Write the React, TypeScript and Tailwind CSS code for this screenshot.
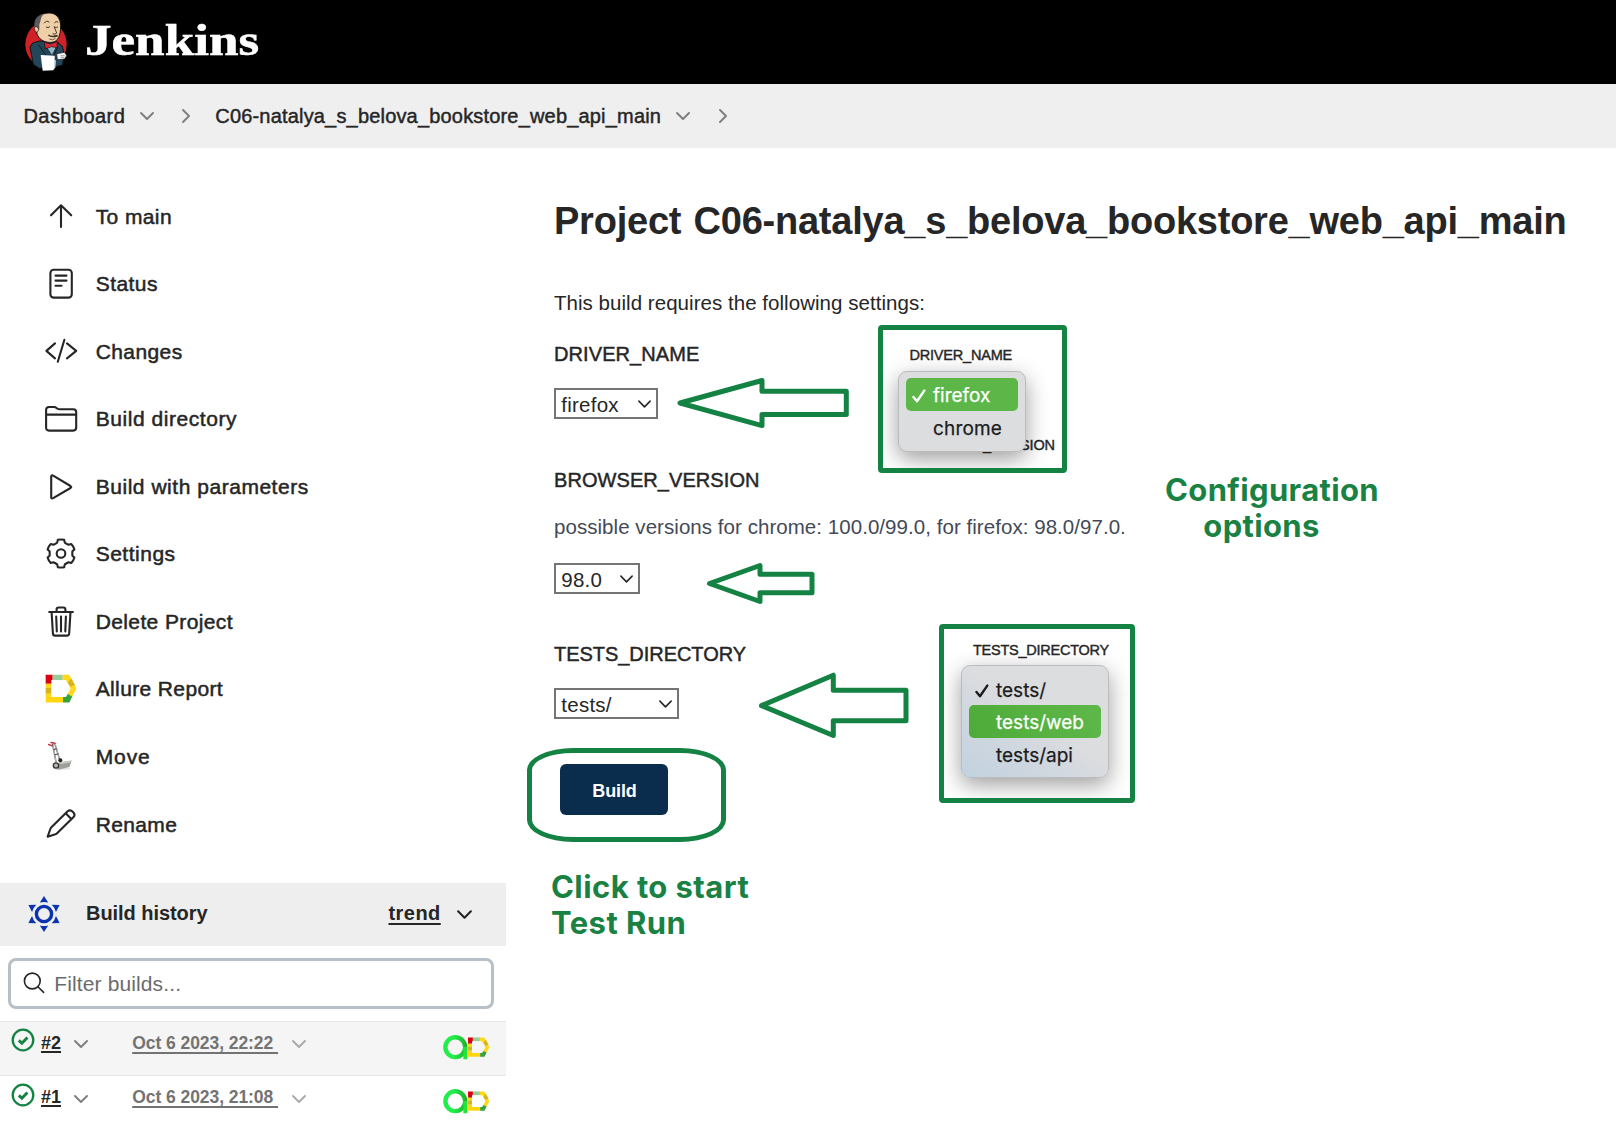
import type { ReactNode } from "react";

const GREEN = "#138243";

function Icon({ children, box = "0 0 34 34" }: { children: ReactNode; box?: string }) {
  return (
    <svg viewBox={box} className="size-[34px] shrink-0" fill="none" stroke="#262626" strokeWidth={2.1} strokeLinecap="round" strokeLinejoin="round">
      {children}
    </svg>
  );
}

function Chevron({ className, width = 2 }: { className: string; width?: number }) {
  return (
    <svg viewBox="0 0 16 10" className={className} fill="none" stroke="currentColor" strokeWidth={width} strokeLinecap="round" strokeLinejoin="round">
      <path d="M2 2l6 6 6-6" />
    </svg>
  );
}

function Separator({ className }: { className: string }) {
  return (
    <svg viewBox="0 0 10 16" className={className} fill="none" stroke="#808080" strokeWidth={2} strokeLinecap="round" strokeLinejoin="round">
      <path d="M2 2l6 6-6 6" />
    </svg>
  );
}

function AllureShape() {
  return (
    <g stroke="none">
      <path d="M76 495H97V511H93V522H76Z" fill="#d8000f" />
      <path d="M97 495H127V511H97Z" fill="#97cc9b" />
      <path d="M127 495H146L157 513L143 522L137 511H127Z" fill="#ffd817" />
      <path d="M153 506L165 527L151 534L142 518Z" fill="#d8b41b" />
      <path d="M162 526L168 537L156 560L142 553L151 537L148 532Z" fill="#ffd817" />
      <path d="M142 553L156 560L147 578H128V562H137Z" fill="#35a33b" />
      <path d="M76 522H93V534H76ZM76 552H93V562H128V578H76Z" fill="#ffd60f" />
      <path d="M76 534H93V552H76Z" fill="#d8b41b" />
    </g>
  );
}

function gearPath() {
  const pt = (deg: number, r: number) => {
    const a = (deg * Math.PI) / 180;
    return `${(17 + r * Math.cos(a)).toFixed(2)} ${(16.5 + r * Math.sin(a)).toFixed(2)}`;
  };
  let d = "";
  for (let k = 0; k < 6; k++) {
    const a = 60 * k - 90;
    d += `${k ? "L" : "M"}${pt(a - 13, 14)}Q${pt(a, 14.5)} ${pt(a + 13, 14)}L${pt(a + 19, 11.6)}Q${pt(a + 30, 11.2)} ${pt(a + 41, 11.6)}`;
  }
  return d + "Z";
}

const menu: { label: string; tracking: string; icon: ReactNode }[] = [
  { label: "To main", tracking: "tracking-[0.4px]", icon: <Icon><path d="M17 28V6.5M7 16.3L17 6.3L27.2 16.3" /></Icon> },
  {
    label: "Status",
    tracking: "tracking-[0.45px]",
    icon: <Icon><rect x="6.4" y="2.8" width="21.4" height="27.8" rx="3.3" /><path d="M11.5 8.6h11M11.5 13.6h11M11.5 18.8h6" /></Icon>,
  },
  { label: "Changes", tracking: "tracking-[0.4px]", icon: <Icon><path d="M11 9.4L2.4 16.9L11 24.4M23 9.4L32.2 16.9L23 24.4M20.4 5.8L13.8 27.8" /></Icon> },
  {
    label: "Build directory",
    tracking: "tracking-[0.55px]",
    icon: <Icon><path d="M5 5H10.2C12.4 5 12.6 7.2 15 7.2H29.3Q32.2 7.2 32.2 10.2V25.6Q32.2 28.6 29.3 28.6H5Q2.1 28.6 2.1 25.6V8Q2.1 5 5 5ZM2.1 12.6H32.2" /></Icon>,
  },
  {
    label: "Build with parameters",
    tracking: "tracking-[0.53px]",
    icon: <Icon><path d="M7.2 6.6V26.9Q7.2 29.2 9.2 28.1L26.5 18Q28 17 26.5 16L9.2 5.6Q7.2 4.6 7.2 6.6Z" /></Icon>,
  },
  { label: "Settings", tracking: "tracking-[0.5px]", icon: <Icon><path d={gearPath()} /><circle cx="17" cy="16.5" r="4.3" /></Icon> },
  {
    label: "Delete Project",
    tracking: "tracking-[0.38px]",
    icon: <Icon><path d="M5.2 7H28.9M12.6 7V4.6Q12.6 2.5 14.6 2.5H19.4Q21.4 2.5 21.4 4.6V7M7.6 7L8.9 28.4Q9 30.6 11 30.6H23Q25 30.6 25.2 28.4L26.5 7M12.2 11.5L12.8 26.4M17 11.5V26.4M21.9 11.5L21.3 26.4" /></Icon>,
  },
  { label: "Allure Report", tracking: "tracking-[0.37px]", icon: <Icon box="71 486.8 102 102"><AllureShape /></Icon> },
  {
    label: "Move",
    tracking: "tracking-[0.9px]",
    icon: (
      <Icon box="71 689.5 102 102">
        <ellipse cx="124" cy="775" rx="26" ry="4" fill="#e4e4e4" stroke="none" />
        <path d="M117 757L153 752L147 770L113 778Z" fill="#9ba197" stroke="#80857c" strokeWidth="1" />
        <path d="M118 757L152 752L150 757L118 762Z" fill="#c9cdc6" stroke="none" />
        <path d="M97 702L107 756M104 701L117 746" stroke="#555" strokeWidth="4.5" />
        <path d="M98 705L107 756M105 702L116 744" stroke="#f1f1f1" strokeWidth="2" />
        <path d="M100 718L109 716M103 734L113 731" stroke="#444" strokeWidth="3" />
        <circle cx="120" cy="750" r="6" fill="#222" stroke="none" />
        <path d="M85 703L96 707M92 697L104 699" stroke="#c33440" strokeWidth="4.5" />
        <circle cx="107" cy="766" r="8" fill="#b5b5b5" stroke="#333" strokeWidth="4" />
      </Icon>
    ),
  },
  {
    label: "Rename",
    tracking: "tracking-[0.35px]",
    icon: <Icon box="71 892 102 102"><g strokeWidth="6.3"><path d="M82 981L90 958Q91 955 94 952L142 905C152 896 169 913 159 923L111 970Q108 973 105 974ZM136 911L153 928" /></g></Icon>,
  },
];

function Butler() {
  return (
    <svg viewBox="0 0 180 225" className="h-[75px] w-[60px] shrink-0">
      <ellipse cx="78" cy="118" rx="62" ry="68" fill="#cf2127" />
      <path d="M38 114L60 108L113 112L127 124L132 146L128 180L104 186L58 190L40 178L34 148L30 126Z" fill="#24465a" stroke="#111" strokeWidth="3" />
      <path d="M74 118L96 152L112 120Z" fill="#8fb4cc" stroke="#111" strokeWidth="2" />
      <path d="M45 62C42 40 58 26 84 24C108 22 122 40 122 62C122 92 114 110 96 112C74 114 56 104 50 84Z" fill="#efcfa8" stroke="#181310" strokeWidth="3" />
      <path d="M44 68C40 44 52 30 72 27C60 36 64 48 58 58L58 72L50 76Z" fill="#5b5a5c" />
      <path d="M48 64C40 66 44 82 52 82L57 72Z" fill="#efcfa8" stroke="#181310" strokeWidth="2" />
      <path d="M72 55Q80 44 88 52M103 54Q108 46 115 52M78 66Q84 70 90 65M104 66Q109 70 114 65M102 64L110 84Q106 90 98 86" fill="none" stroke="#30231b" strokeWidth="2.6" />
      <path d="M85 90Q94 98 113 92" fill="none" stroke="#46342a" strokeWidth="5" />
      <path d="M88 102Q98 107 106 101" fill="none" stroke="#30231b" strokeWidth="2" />
      <path d="M73 112L91 117L111 110L112 128L94 125L76 132Z" fill="#dc2830" stroke="#111" strokeWidth="2" />
      <path d="M56 120L80 154L92 160M112 128L100 156" fill="none" stroke="#101d25" strokeWidth="3" />
      <path d="M110 146L134 142L140 152L134 162L112 164Z" fill="#f4f4f4" stroke="#111" strokeWidth="2" />
      <path d="M122 152H134M122 157H133" stroke="#777" strokeWidth="2" />
      <path d="M62 150L104 152L104 188L100 196L68 197Z" fill="#fff" />
      <path d="M102 166L108 166L106 188L102 192Z" fill="#cfd5d8" />
    </svg>
  );
}

function SunIcon() {
  return (
    <svg viewBox="-18 -18 36 36" className="size-9 shrink-0">
      <circle r="7.6" fill="none" stroke="#0b33ad" strokeWidth="3.4" />
      {[0, 60, 120, 180, 240, 300].map((a) => (
        <path key={a} transform={`rotate(${a})`} d="M0 -18L4.2 -11.4Q0 -12.6 -4.2 -11.4Z" fill="#0b33ad" />
      ))}
    </svg>
  );
}

function BuildRow({ id, date, shade }: { id: string; date: string; shade: string }) {
  return (
    <div className={`flex h-[54.4px] items-start border-t border-[#e9e9e9] pl-[11px] ${shade}`}>
      <svg viewBox="0 0 24 24" className="mt-[6.5px] size-6 shrink-0" fill="none" stroke="#138243">
        <circle cx="12" cy="12" r="10.3" strokeWidth="2.3" />
        <path d="M7.8 12.4L10.9 15.2L16.4 9.4" strokeWidth="2.9" />
      </svg>
      <span className="ml-[6px] mt-[9px] w-[31.7px] text-[18px] font-bold leading-6 text-[#262626] underline decoration-[1.5px] underline-offset-2">{id}</span>
      <Chevron className="mt-[17.5px] h-[10px] w-4 text-[#808080]" />
      <span className="ml-[43.5px] mt-[9px] w-[158.8px] whitespace-pre text-[17.5px] font-bold leading-6 tracking-[-0.06px] text-[#737373] underline decoration-[1.5px] underline-offset-[3px]">{date + "\u00a0"}</span>
      <Chevron className="mt-[17.5px] h-[10px] w-4 text-[#ababab]" />
      <svg viewBox="0 0 48 26" className="ml-[136px] mt-[12px] h-[26px] w-12 shrink-0">
        <defs>
          <linearGradient id={`a${id.slice(1)}`} x1="0" x2="1">
            <stop offset="0.4" stopColor="#22ee4b" />
            <stop offset="1" stopColor="#1fb62d" />
          </linearGradient>
        </defs>
        <circle cx="12.3" cy="13.2" r="9.9" fill="none" stroke={`url(#a${id.slice(1)})`} strokeWidth="4.4" />
        <path d="M20.2 13H24.3V25.2H20.4Z" fill="#22e53c" />
        <g transform="translate(7.4 -111.4) scale(0.232)">
          <AllureShape />
        </g>
      </svg>
    </div>
  );
}

function SelectBox({ value, className }: { value: string; className: string }) {
  return (
    <div className={`flex h-[31px] items-center justify-between border-2 border-[#757575] pl-[5.3px] pr-[3.8px] text-[20.5px] tracking-[0.25px] ${className}`}>
      <span className="pt-[2px] leading-6">{value}</span>
      <Chevron className="h-[10px] w-[15px] text-[#262626]" width={1.7} />
    </div>
  );
}

function Tick({ color }: { color: string }) {
  return (
    <svg viewBox="0 0 14 14" className="size-[14px]" fill="none" stroke={color} strokeWidth="2.4" strokeLinecap="round" strokeLinejoin="round">
      <path d="M1.5 8L5 12.2L12.3 1.6" />
    </svg>
  );
}

function Option({ label, checked, active, className }: { label: string; checked?: boolean; active?: boolean; className: string }) {
  return (
    <div className={`flex h-[32.6px] items-center rounded-[5px] pt-[4px] font-[Inter] text-[19px] ${active ? "text-white" : "text-[#1c1c1c]"} ${className}`}>
      <span className="w-[21px] shrink-0">{checked && <Tick color={active ? "#fff" : "#1c1c1c"} />}</span>
      <span className="[-webkit-text-stroke:0.25px]">{label}</span>
    </div>
  );
}

export default function App() {
  return (
    <div className="relative h-[1124px] w-[1616px] overflow-hidden bg-white font-['Liberation_Sans',Arial,sans-serif] text-[#262626]">
      <header className="flex h-[84px] items-start bg-black pl-5 pt-[5px]">
        <Butler />
        <span className="ml-[5px] mt-[8px] origin-left scale-x-[1.18] font-['Liberation_Serif',serif] text-[45px] font-bold leading-[54px] text-white [-webkit-text-stroke:0.6px]">
          Jenkins
        </span>
      </header>

      <nav className="flex h-16 items-center bg-[#efefef] pl-[23.5px] text-[20px] [-webkit-text-stroke:0.45px]">
        <span className="w-[115.5px] tracking-[0.43px]">Dashboard</span>
        <Chevron className="h-[10px] w-4 text-[#808080]" />
        <Separator className="ml-[26px] h-4 w-[10px]" />
        <span className="ml-[24.3px] w-[459.7px] tracking-[0.18px]">C06-natalya_s_belova_bookstore_web_api_main</span>
        <Chevron className="h-[10px] w-4 text-[#808080]" />
        <Separator className="ml-[27px] h-4 w-[10px]" />
      </nav>

      <div className="flex">
        <aside className="w-[506px] shrink-0 pt-[34.6px]">
          <ul>
            {menu.map((m) => (
              <li key={m.label} className="flex h-[67.55px] items-center gap-[18px] pl-[43.7px] text-[21px] [-webkit-text-stroke:0.5px]">
                {m.icon}
                <span className={m.tracking}>{m.label}</span>
              </li>
            ))}
          </ul>

          <div className="mt-[24.9px] flex h-[63px] items-center bg-[#eeeeee] pl-[25.5px] text-[20px] font-bold">
            <SunIcon />
            <span className="ml-[24.5px] w-[302.5px] pb-[2px] tracking-[-0.05px]">Build history</span>
            <span className="w-[67.5px] pb-[2px] tracking-[0.45px] underline decoration-[1.5px] underline-offset-[3px]">trend</span>
            <Chevron className="h-[11px] w-[17px]" />
          </div>

          <div className="ml-2 mt-[12px] flex h-[51px] w-[486px] items-center rounded-lg border-[3px] border-[#b6c0c6] pl-[12px]">
            <svg viewBox="0 0 22 22" className="size-[22px]" fill="none" stroke="#262626" strokeWidth="1.6" strokeLinecap="round">
              <circle cx="9.3" cy="9" r="7.9" />
              <path d="M15.2 15L20.6 20.4" />
            </svg>
            <span className="ml-[9.3px] text-[21px] tracking-[0.12px] text-[#6b6b6b]">Filter builds...</span>
          </div>

          <div className="mt-[12px]">
            <BuildRow id="#2" date="Oct 6 2023, 22:22" shade="bg-[#f5f5f5]" />
            <BuildRow id="#1" date="Oct 6 2023, 21:08" shade="bg-white" />
          </div>
        </aside>

        <main className="pl-12 pt-[51px]">
          <h1 className="whitespace-nowrap text-[38px] font-bold leading-[44px] tracking-[-0.23px] [word-spacing:2px]">Project C06-natalya_s_belova_bookstore_web_api_main</h1>
          <p className="mt-[44.5px] text-[20.5px] leading-[30px] tracking-[0.04px]">This build requires the following settings:</p>
          <h2 className="mt-[21.5px] text-[20px] leading-[30px] tracking-[0.09px] [-webkit-text-stroke:0.45px]">DRIVER_NAME</h2>
          <SelectBox value="firefox" className="mt-[19px] w-[104px]" />
          <h2 className="mt-[46px] text-[20px] leading-[30px] tracking-[0.07px] [-webkit-text-stroke:0.45px]">BROWSER_VERSION</h2>
          <p className="mt-[16.5px] text-[20.5px] leading-[30px] tracking-[0.05px] text-[#444a57]">possible versions for chrome: 100.0/99.0, for firefox: 98.0/97.0.</p>
          <SelectBox value="98.0" className="mt-[21.5px] w-[86px]" />
          <h2 className="mt-[45px] text-[20px] leading-[30px] tracking-[-0.04px] [-webkit-text-stroke:0.45px]">TESTS_DIRECTORY</h2>
          <SelectBox value="tests/" className="mt-[19px] w-[125px]" />
          <button className="ml-[6px] mt-[45px] flex h-[50.5px] w-[108px] items-center justify-center rounded-[6px] bg-[#0b2d4d] pl-px pt-1 text-[18px] font-bold tracking-[-0.1px] text-white">
            Build
          </button>
        </main>
      </div>

      <div className="absolute left-[526.5px] top-[748px] h-[93.5px] w-[199px] rounded-[46px/22px] border-[5px] border-[#138243]" />

      <svg className="absolute left-0 top-0" width="1616" height="1124" fill="none" stroke={GREEN} strokeWidth="5" strokeLinejoin="round">
        <path d="M680 403L762 380.5V391.3H846.3V414.4H762V425.6Z" />
        <path d="M709.5 583.5L760 565.5V574.2H812V592.7H760V601.5Z" />
        <path d="M761.5 705.6L833.3 675.2V690.3H906V720.8H833.3V735.5Z" />
      </svg>

      <div className="absolute left-[878px] top-[325px] h-[148px] w-[189px] overflow-hidden rounded border-[5px] border-[#138243] bg-white">
        <div className="pl-[26.5px] pt-[15px] text-[14.5px] leading-5 tracking-[-0.2px] [-webkit-text-stroke:0.4px]">DRIVER_NAME</div>
        <div className="mt-[70px] whitespace-nowrap pl-[26.5px] text-[14.5px] leading-5 tracking-[-0.2px] [-webkit-text-stroke:0.4px]">BROWSER_VERSION</div>
        <div className="absolute left-[15px] top-[40.5px] h-[81px] w-[127.5px] rounded-[9px] border border-[#bcbcbc] bg-[#dcdddf] px-[7px] pt-[6.5px] shadow-[0_7px_22px_rgba(0,0,0,0.38)]">
          <Option label="firefox" checked active className="bg-[#5db648] pl-[6px]" />
          <Option label="chrome" className="pl-[6px] tracking-[0.15px]" />
        </div>
      </div>

      <div className="absolute left-[939px] top-[624px] h-[179px] w-[195.5px] overflow-hidden rounded border-[5px] border-[#138243] bg-white">
        <div className="pl-[29px] pt-[11px] text-[14.5px] leading-5 tracking-[-0.25px] [-webkit-text-stroke:0.4px]">TESTS_DIRECTORY</div>
        <div className="absolute left-[17px] top-[35.5px] h-[113.5px] w-[148px] rounded-[9px] border border-[#bcbcbc] bg-[linear-gradient(35deg,#c2d2e0_0%,#cfd7df_30%,#dcdddf_55%)] px-[7px] pt-[7px] shadow-[0_7px_22px_rgba(0,0,0,0.38)]">
          <Option label="tests/" checked className="pl-[6px]" />
          <Option label="tests/web" active className="bg-[linear-gradient(60deg,#4dab38,#5fb84a)] pl-[6px]" />
          <Option label="tests/api" className="pl-[6px]" />
        </div>
      </div>

      <div className="absolute left-[1162px] top-[472px] w-[220px] text-center font-[Inter] text-[31px] font-bold leading-9 tracking-[0.35px] text-[#198243]">
        Configuration
        <br />
        <span className="relative left-[-10.5px]">options</span>
      </div>
      <div className="absolute left-[551px] top-[868.5px] font-[Inter] text-[31px] font-bold leading-9 tracking-[0.43px] text-[#198243]">
        Click to start
        <br />
        Test Run
      </div>
    </div>
  );
}
